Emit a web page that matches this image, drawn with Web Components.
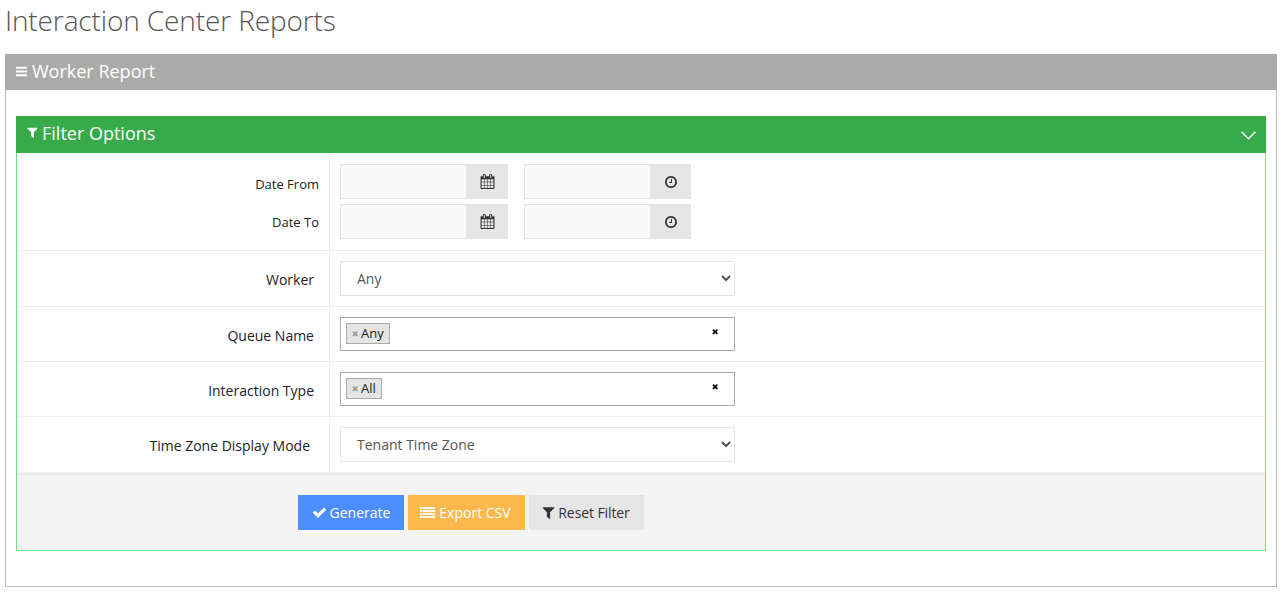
<!DOCTYPE html>
<html lang="en">
<head>
<meta charset="utf-8">
<title>Interaction Center Reports</title>
<style>
  html, body { margin: 0; background: #fff; }
  body { font-family: "Open Sans", sans-serif; color: #333; overflow: hidden; }
</style>
</head>
<body>
<report-page heading="Interaction Center Reports">
  <report-panel heading="Worker Report">
    <filter-panel heading="Filter Options">
      <filter-row tall pad="10">
        <date-labels slot="label"></date-labels>
        <date-range></date-range>
      </filter-row>
      <filter-row label="Worker" wide>
        <plain-select value="Any"></plain-select>
      </filter-row>
      <filter-row label="Queue Name">
        <tag-select value="Any"></tag-select>
      </filter-row>
      <filter-row label="Interaction Type">
        <tag-select value="All"></tag-select>
      </filter-row>
      <filter-row label="Time Zone Display Mode" pad="19" last>
        <plain-select value="Tenant Time Zone"></plain-select>
      </filter-row>
      <div slot="footer">
        <flat-button icon="check" tone="blue" width="106">Generate</flat-button>
        <flat-button icon="list" tone="orange" width="117">Export CSV</flat-button>
        <flat-button icon="filter" tone="grey" width="115">Reset Filter</flat-button>
      </div>
    </filter-panel>
  </report-panel>
</report-page>

<script>
// font awesome 4 shapes, 1792 grid
const ICONS = {
  bars: 'M1664 1344v128q0 26-19 45t-45 19H192q-26 0-45-19t-19-45v-128q0-26 19-45t45-19h1408q26 0 45 19t19 45zm0-512v128q0 26-19 45t-45 19H192q-26 0-45-19t-19-45V832q0-26 19-45t45-19h1408q26 0 45 19t19 45zm0-512v128q0 26-19 45t-45 19H192q-26 0-45-19t-19-45V320q0-26 19-45t45-19h1408q26 0 45 19t19 45z',
  filter: 'M1595 295q17 41-14 70l-493 493v742q0 42-39 59-13 5-25 5-27 0-45-19l-256-256q-19-19-19-45V858L211 365q-31-29-14-70 17-39 59-39h1280q42 0 59 39z',
  check: 'M1671 566q0 40-28 68l-724 724-136 136q-28 28-68 28t-68-28l-136-136-362-362q-28-28-28-68t28-68l136-136q28-28 68-28t68 28l294 295 656-657q28-28 68-28t68 28l136 136q28 28 28 68z',
  clock: 'M1024 544v448q0 14-9 23t-23 9H672q-14 0-23-9t-9-23v-64q0-14 9-23t23-9h224V544q0-14 9-23t23-9h64q14 0 23 9t9 23zm416 352q0-148-73-273t-198-198-273-73-273 73-198 198-73 273 73 273 198 198 273 73 273-73 198-198 73-273zm224 0q0 209-103 385.500T1281.500 1561 896 1664t-385.500-103T231 1281.500 128 896t103-385.500T510.500 231 896 128t385.500 103T1561 510.500 1664 896z',
  calendar: 'M192 1664h288v-288H192v288zm352 0h320v-288H544v288zm-352-352h288V992H192v320zm352 0h320V992H544v320zM192 928h288V640H192v288zm736 736h320v-288H928v288zM544 928h320V640H544v288zm768 736h288v-288h-288v288zm-384-352h320V992H928v320zM576 448V160q0-13-9.500-22.500T544 128h-64q-13 0-22.500 9.500T448 160v288q0 13 9.500 22.500T480 480h64q13 0 22.500-9.500T576 448zm736 864h288V992h-288v320zM928 928h320V640H928v288zm384 0h288V640h-288v288zm32-480V160q0-13-9.500-22.500T1312 128h-64q-13 0-22.500 9.500T1216 160v288q0 13 9.500 22.500t22.500 9.500h64q13 0 22.500-9.500t9.500-22.500zm384-64v1280q0 52-38 90t-90 38H192q-52 0-90-38t-38-90V384q0-52 38-90t90-38h128v-96q0-66 47-113T480 0h64q66 0 113 47t47 113v96h384v-96q0-66 47-113t113-47h64q66 0 113 47t47 113v96h128q52 0 90 38t38 90z',
  list: 'M0 239h239v239H0zM300 239h1492v239H300zM0 598h239v239H0zM300 598h1492v239H300zM0 956h239v239H0zM300 956h1492v239H300zM0 1314h239v239H0zM300 1314h1492v239H300z',
  times: 'M1298 1214q0 40-28 68l-136 136q-28 28-68 28t-68-28L704 1124l-294 294q-28 28-68 28t-68-28L138 1282q-28-28-28-68t28-68l294-294-294-294q-28-28-28-68t28-68l136-136q28-28 68-28t68 28l294 294 294-294q28-28 68-28t68 28l136 136q28 28 28 68t-28 68L976 852l294 294q28 28 28 68z'
};

class FaIcon extends HTMLElement {
  connectedCallback() {
    if (this.shadowRoot) return;
    const size = this.getAttribute('size') || 14;
    const name = this.getAttribute('name');
    this.attachShadow({ mode: 'open' });
    this.shadowRoot.innerHTML = `
      <style>
        :host { display: inline-flex; flex: none; line-height: 0; }
        svg { fill: currentColor; display: block; }
      </style>
      <svg width="${size}" height="${size}" viewBox="0 0 1792 1792"><path d="${ICONS[name]}"/></svg>
    `;
  }
}
customElements.define('fa-icon', FaIcon);

class ReportPage extends HTMLElement {
  constructor() {
    super();
    this.attachShadow({ mode: 'open' });
    this.shadowRoot.innerHTML = `
      <style>
        :host { display: block; padding: 0 8px 0 5px; }
        h1 {
          margin: 0;
          height: 54px;
          font: 300 28px/40px "Open Sans", sans-serif;
          letter-spacing: -.12px;
          color: #555;
        }
      </style>
      <h1>${this.getAttribute('heading')}</h1>
      <slot></slot>
    `;
  }
}
customElements.define('report-page', ReportPage);

class ReportPanel extends HTMLElement {
  constructor() {
    super();
    this.attachShadow({ mode: 'open' });
    this.shadowRoot.innerHTML = `
      <style>
        :host { display: block; border: 1px solid #bbb; border-top: 0; }
        header {
          height: 36px;
          box-sizing: border-box;
          margin: 0 -1px;
          padding: 0 0 2px 10px;
          background: #aaa;
          color: #fff;
          display: flex;
          align-items: center;
          gap: 4px;
          font-size: 18px;
        }
        .body { padding: 26px 10px 35px; }
      </style>
      <header><fa-icon name="bars" size="13"></fa-icon><span>${this.getAttribute('heading')}</span></header>
      <div class="body"><slot></slot></div>
    `;
  }
}
customElements.define('report-panel', ReportPanel);

class FilterPanel extends HTMLElement {
  constructor() {
    super();
    this.attachShadow({ mode: 'open' });
    this.shadowRoot.innerHTML = `
      <style>
        :host { display: block; border: 1px solid #6de27f; border-top: 0; }
        header {
          height: 37px;
          box-sizing: border-box;
          margin: 0 -1px;
          padding: 0 10px 4px 10px;
          background: #37ab49;
          color: #fff;
          display: flex;
          align-items: center;
          gap: 3px;
          font-size: 18px;
        }
        header span { flex: 1; }
        .chev { display: block; margin-top: 5px; }
        footer {
          height: 76px;
          border-top: 2px solid #eee;
          box-shadow: inset 0 1px #e4e4e4;
          background: #f4f4f4;
        }
        ::slotted([slot="footer"]) {
          display: flex;
          gap: 4px;
          padding: 21px 0 0 281px;
        }
      </style>
      <header>
        <fa-icon name="filter" size="13"></fa-icon>
        <span>${this.getAttribute('heading')}</span>
        <svg class="chev" width="15" height="9" viewBox="0 0 15 9" fill="none" stroke="#fff" stroke-width="1.4"><path d="M.6.8l6.9 6.9L14.4.8"/></svg>
      </header>
      <slot></slot>
      <footer><slot name="footer"></slot></footer>
    `;
  }
}
customElements.define('filter-panel', FilterPanel);

class FilterRow extends HTMLElement {
  constructor() {
    super();
    const label = this.getAttribute('label') || '';
    const pad = this.getAttribute('pad') || 15;
    this.attachShadow({ mode: 'open' });
    this.shadowRoot.innerHTML = `
      <style>
        :host {
          display: grid;
          grid-template-columns: 313px 1fr;
          height: 55px;
          box-sizing: border-box;
          border-bottom: 1px solid #eee;
          font-size: 14px;
          color: #222;
        }
        :host([tall]) { height: 98px; }
        :host([wide]) { height: 56px; }
        :host([last]) { border-bottom: 0; }
        .label {
          border-right: 1px solid #eee;
          display: flex;
          align-items: center;
          justify-content: flex-end;
          padding: 2px ${pad}px 0 0;
        }
        :host([tall]) .label { padding-top: 0; }
        .field { padding-left: 10px; display: flex; align-items: center; }
      </style>
      <div class="label"><slot name="label">${label}</slot></div>
      <div class="field"><slot></slot></div>
    `;
  }
}
customElements.define('filter-row', FilterRow);

class DateLabels extends HTMLElement {
  constructor() {
    super();
    this.attachShadow({ mode: 'open' });
    this.shadowRoot.innerHTML = `
      <style>
        :host {
          display: grid;
          grid-auto-rows: 35px;
          row-gap: 5px;
          font-size: 13px;
          text-align: right;
        }
        span { align-self: center; }
        .from { padding-top: 5px; }
        .to { padding-top: 1px; }
      </style>
      <span class="from">Date From</span>
      <span class="to">Date To</span>
    `;
  }
}
customElements.define('date-labels', DateLabels);

class PlainSelect extends HTMLElement {
  constructor() {
    super();
    const value = this.getAttribute('value');
    this.attachShadow({ mode: 'open' });
    this.shadowRoot.innerHTML = `
      <style>
        :host { display: block; }
        select {
          display: block;
          width: 395px;
          height: 35px;
          box-sizing: border-box;
          padding: 0 0 0 12px;
          border: 1px solid #e5e5e5;
          border-radius: 0;
          outline: 0;
          background: #fff;
          color: #555;
          font: 14px "Open Sans", sans-serif;
        }
      </style>
      <select><option>${value}</option></select>
    `;
  }
}
customElements.define('plain-select', PlainSelect);

class TagSelect extends HTMLElement {
  constructor() {
    super();
    const value = this.getAttribute('value');
    this.attachShadow({ mode: 'open' });
    this.shadowRoot.innerHTML = `
      <style>
        :host {
          display: flex;
          align-items: flex-start;
          justify-content: space-between;
          width: 395px;
          height: 34px;
          box-sizing: border-box;
          border: 1px solid #aaa;
          padding: 5px 14px 0 5px;
          background: #fff;
          font-size: 13px;
          color: #222;
        }
        .tag {
          display: flex;
          align-items: center;
          gap: 1px;
          height: 21px;
          box-sizing: border-box;
          padding: 0 5px 2px 5px;
          border: 1px solid #aaa;
          background: #e4e4e4;
        }
        .tag fa-icon { color: #999; padding-top: 2px; }
        .clear { color: #000; padding-top: 5px; }
      </style>
      <span class="tag"><fa-icon name="times" size="8"></fa-icon>${value}</span>
      <fa-icon class="clear" name="times" size="8"></fa-icon>
    `;
  }
}
customElements.define('tag-select', TagSelect);

class AddonInput extends HTMLElement {
  constructor() {
    super();
    this.attachShadow({ mode: 'open' });
    this.shadowRoot.innerHTML = `
      <style>
        :host { display: flex; height: 35px; width: var(--w, 168px); }
        input {
          flex: 1;
          min-width: 0;
          box-sizing: border-box;
          border: 1px solid #e5e5e5;
          border-right: 0;
          border-radius: 0;
          outline: 0;
          background: #f9f9f9;
        }
        .addon {
          width: var(--addon, 42px);
          display: flex;
          align-items: center;
          justify-content: center;
          background: #e5e5e5;
          color: #333;
        }
      </style>
      <input type="text">
      <span class="addon"><fa-icon name="${this.getAttribute('icon')}" size="${this.getAttribute('size') || 14}"></fa-icon></span>
    `;
  }
}
customElements.define('addon-input', AddonInput);

class DateRange extends HTMLElement {
  constructor() {
    super();
    this.attachShadow({ mode: 'open' });
    this.shadowRoot.innerHTML = `
      <style>
        :host { display: grid; grid-template-columns: 168px 167px; gap: 5px 16px; }
        .time { --w: 167px; --addon: 41px; }
      </style>
      <addon-input icon="calendar" size="15"></addon-input>
      <addon-input class="time" icon="clock" size="14"></addon-input>
      <addon-input icon="calendar" size="15"></addon-input>
      <addon-input class="time" icon="clock" size="14"></addon-input>
    `;
  }
}
customElements.define('date-range', DateRange);

class FlatButton extends HTMLElement {
  constructor() {
    super();
    const tones = {
      blue: ['#4c8eff', '#fff'],
      orange: ['#ffb84d', '#fff'],
      grey: ['#e5e5e5', '#333']
    };
    const tone = tones[this.getAttribute('tone')];
    this.attachShadow({ mode: 'open' });
    this.shadowRoot.innerHTML = `
      <style>
        :host {
          display: flex;
          align-items: center;
          justify-content: center;
          gap: 3px;
          width: ${this.getAttribute('width')}px;
          height: 35px;
          box-sizing: border-box;
          background: ${tone[0]};
          color: ${tone[1]};
          font-size: 14px;
          cursor: pointer;
        }
        :host([tone="orange"]) { gap: 4px; padding-right: 2px; }
        :host([tone="grey"]) { letter-spacing: -.1px; gap: 2px; padding-right: 2px; }
      </style>
      <fa-icon name="${this.getAttribute('icon')}" size="15"></fa-icon><slot></slot>
    `;
  }
}
customElements.define('flat-button', FlatButton);
</script>
</body>
</html>
